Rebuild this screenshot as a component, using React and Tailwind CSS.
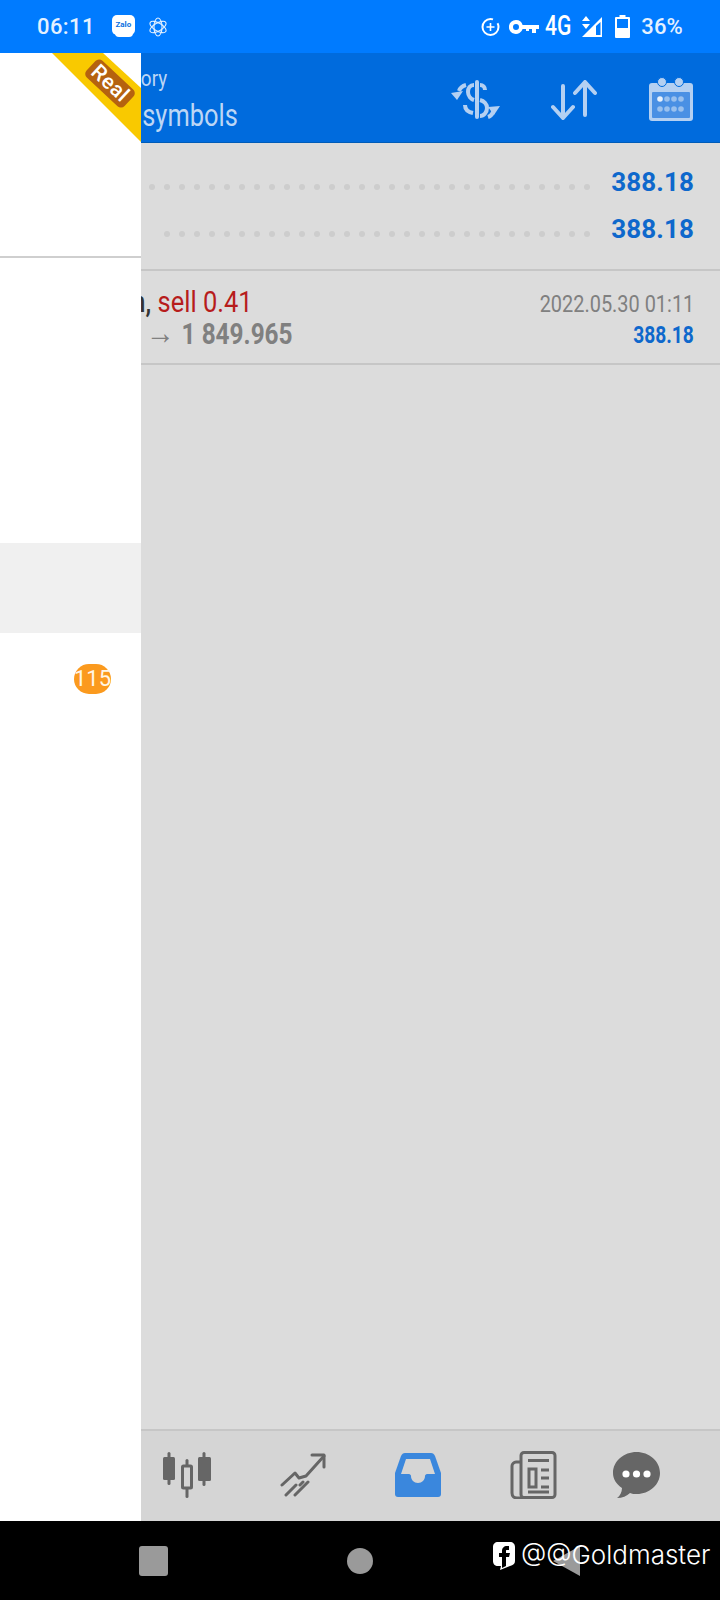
const FONT = { fontFamily: "Roboto, sans-serif" };

function Dots({ count }) {
  return (
    <div className="flex gap-[9px] mb-[6px]">
      {[...Array(count)].map((_, i) => (
        <div key={i} className="w-[6px] h-[6px] rounded-full bg-[#cdcdcd]"></div>
      ))}
    </div>
  );
}

function DollarSwap() {
  return (
    <svg width="50" height="40" viewBox="0 0 50 40" fill="none" stroke="#b4d0f2" strokeWidth="4">
      <path d="M26 2v35" strokeLinecap="round" />
      <path d="M23 5c-4 0-6 3-6 7s3 7 6 8" />
      <path d="M34 10c0-3-2-5-5-5" />
      <path d="M29 20c4 1 7 4 7 8s-3 8-7 8" />
      <path d="M14 25c0 4 3 7 8 8" />
      <path d="M15 5c-4 1-6 3-7 6" />
      <path d="M0 13l12-2-6 9z" fill="#b4d0f2" stroke="none" />
      <path d="M37 37c3-1 5-3 6-8" />
      <path d="M49 26l-12 1 6 8z" fill="#b4d0f2" stroke="none" />
    </svg>
  );
}

function SortArrows() {
  return (
    <svg width="46" height="40" viewBox="0 0 46 40" fill="none" stroke="#b4d0f2" strokeWidth="4" strokeLinecap="round" strokeLinejoin="round">
      <path d="M12 6v31M2 27l10 11 10-11" />
      <path d="M34 35V3M24 13L34 2l10 11" />
    </svg>
  );
}

function Calendar() {
  return (
    <svg width="44" height="44" viewBox="0 0 44 44">
      <rect x="0" y="6" width="44" height="38" rx="3" fill="#b4d0f2" />
      <circle cx="13" cy="5" r="4.5" fill="#b4d0f2" stroke="#006bdd" strokeWidth="1" />
      <circle cx="30" cy="5" r="4.5" fill="#b4d0f2" stroke="#006bdd" strokeWidth="1" />
      <rect x="3" y="15" width="38" height="26" rx="1" fill="#4a90e4" />
      {[11, 18, 25, 32].map((x, i) => (
        <circle key={x} cx={x} cy="22" r="2.8" fill={i === 0 ? "#e8f1fc" : "#b4d0f2"} opacity={i === 0 ? 1 : 0.75} />
      ))}
      {[11, 18, 25, 32].map((x) => (
        <circle key={x} cx={x} cy="32" r="2.8" fill="#b4d0f2" opacity="0.75" />
      ))}
    </svg>
  );
}

function Candles() {
  return (
    <svg width="48" height="46" viewBox="0 0 48 46" fill="#666666">
      <rect x="4.500" y="0" width="3" height="33" rx="1.5" />
      <rect x="0" y="5" width="12" height="23" rx="1.5" />
      <rect x="22.500" y="7" width="3" height="39" rx="1.5" />
      <rect x="19.500" y="14" width="9" height="22" rx="1" fill="#d5d5d5" stroke="#666666" strokeWidth="3" />
      <rect x="39.500" y="0" width="3" height="34" rx="1.5" />
      <rect x="35" y="5" width="13" height="24" rx="1.5" />
    </svg>
  );
}

function Trend() {
  return (
    <svg width="46" height="44" viewBox="0 0 46 44" fill="none" stroke="#666666" strokeWidth="3" strokeLinecap="round" strokeLinejoin="round">
      <path d="M2 32L15 20l4 5 7-2L44 3" />
      <path d="M32 2h12v12" />
      <path d="M6 42L16 32M15 42l13-13M20 32l3-3" />
    </svg>
  );
}

function Inbox() {
  return (
    <svg width="46" height="44" viewBox="0 0 46 44">
      <path d="M10 0h26c2 0 3 1 4 3l6 17v21c0 2-1 3-3 3H3c-2 0-3-1-3-3V20L6 3c1-2 2-3 4-3z" fill="#3a87dd" />
      <path d="M11 6h24l5 15H32c-1 0-2 1-2 2 0 4-3 7-7 7s-7-3-7-7c0-1-1-2-2-2H6z" fill="#d5d5d5" />
    </svg>
  );
}

function News() {
  return (
    <svg width="47" height="48" viewBox="0 0 47 48" fill="none" stroke="#666666" strokeWidth="3">
      <rect x="11" y="1.5" width="34" height="45" rx="3" />
      <path d="M11 11H6c-2 0-4 2-4 4v27c0 3 2 5 5 5h7" />
      <path d="M18 9.500h21" />
      <rect x="19" y="18" width="7" height="18" />
      <path d="M31 19h8M31 27h8M31 36h8M18 41h21" />
    </svg>
  );
}

function Chat() {
  return (
    <svg width="47" height="46" viewBox="0 0 47 46">
      <path d="M23.500 0C36 0 47 9 47 21s-11 21-23 21c-3 0-5 0-7-1-3 3-8 5-13 5 3-2 5-6 5-10C3 32 0 27 0 21 0 9 11 0 23.500 0z" fill="#666666" />
      <circle cx="13" cy="22" r="3.6" fill="#ffffff" />
      <circle cx="23.500" cy="22" r="3.6" fill="#ffffff" />
      <circle cx="34" cy="22" r="3.6" fill="#ffffff" />
    </svg>
  );
}

export default function App() {
  return (
    <div className="relative w-[720px] h-[1600px] overflow-hidden flex flex-col bg-black" style={FONT}>
      {/* status bar */}
      <div className="h-[53px] bg-[#007bff] flex items-center text-[#e4f1ff] pl-[37px] pr-[37px] shrink-0">
        <span className="text-[22px] font-medium tracking-[0.4px]">06:11</span>
        <div className="relative ml-[17px] w-[23px] h-[20px] -mt-[3px] bg-white rounded-[5px] flex items-center justify-center">
          <span className="text-[8px] font-bold text-[#0a6fe0] leading-none">Zalo</span>
          <div className="absolute left-[3px] right-[2px] -bottom-[2px] h-[5px] bg-white rounded-b-[4px]"></div>
        </div>
        <svg className="ml-[14px]" width="18" height="20" viewBox="0 0 18 20" fill="none" stroke="#e4f1ff" strokeWidth="1.1">
          <ellipse cx="9" cy="10" rx="4" ry="9" />
          <ellipse cx="9" cy="10" rx="4" ry="9" transform="rotate(60 9 10)" />
          <ellipse cx="9" cy="10" rx="4" ry="9" transform="rotate(-60 9 10)" />
        </svg>
        <div className="ml-auto flex items-center">
          <svg width="19" height="20" viewBox="0 0 19 20" fill="none" stroke="#fff" strokeWidth="2">
            <circle cx="9.5" cy="10" r="8" strokeDasharray="40 6" />
            <path d="M9.500 6v8M5.500 10h8" strokeWidth="1.6" />
          </svg>
          <svg className="ml-[9px]" width="30" height="16" viewBox="0 0 30 16" fill="#fff">
            <path d="M7 1a7 7 0 0 1 6.6 5H30v4h-3v4h-4v-4h-3v2h-3v-2h-3.400A7 7 0 1 1 7 1zm0 4a3 3 0 1 0 0 6 3 3 0 0 0 0-6z" />
          </svg>
          <span className="ml-[6px] w-[27px] text-[27px] leading-none font-medium text-white inline-block scale-x-[0.78] origin-left whitespace-nowrap">4G</span>
          <svg className="ml-[9px]" width="21" height="21" viewBox="0 0 21 21" fill="#fff">
            <path d="M5 0l4 5H1zM1 8h8l-4 5z" />
            <path d="M21 1v20H1zM19.500 6L15 10v9h4.500z" fillRule="evenodd" />
          </svg>
          <svg className="ml-[13px]" width="15" height="23" viewBox="0 0 15 23">
            <path d="M4.500 0h6v2H14a1 1 0 0 1 1 1v19a1 1 0 0 1-1 1H1a1 1 0 0 1-1-1V3a1 1 0 0 1 1-1h3.500z" fill="#fff" />
            <rect x="2" y="4" width="11" height="9" fill="#007bff" />
          </svg>
          <span className="ml-[11px] text-[22px] font-medium tracking-[0.2px]">36%</span>
        </div>
      </div>

      <div className="relative flex-1 flex flex-col bg-[#dcdcdc]">
        {/* toolbar */}
        <div className="h-[90px] shrink-0 bg-[#006bdd] border-b border-[#005cb8] flex items-center text-[#bcd6f5]">
          <div className="pl-[107px] pt-[4px] leading-none">
            <div className="text-[22px] scale-x-[0.86] origin-left">History</div>
            <div className="mt-[10px] text-[31px] scale-x-[0.82] origin-left whitespace-nowrap">All symbols</div>
          </div>
          <div className="ml-auto flex items-center pr-[27px] pt-[4px]">
            <DollarSwap />
            <div className="ml-[50px]"><SortArrows /></div>
            <div className="ml-[52px] -mt-[2px]"><Calendar /></div>
          </div>
        </div>

        {/* totals */}
        <div className="h-[128px] shrink-0 border-b-2 border-[#c6c6c6] pr-[26px] pt-[26px] flex flex-col items-end gap-[20px]">
          <div className="flex items-end">
            <Dots count={30} />
            <span className="ml-[21px] text-[26px] leading-[27px] font-bold text-[#0e68cc] tracking-[0.1px]">388.18</span>
          </div>
          <div className="flex items-end">
            <Dots count={29} />
            <span className="ml-[21px] text-[26px] leading-[27px] font-bold text-[#0e68cc] tracking-[0.1px]">388.18</span>
          </div>
        </div>

        {/* deal row */}
        <div className="h-[94px] shrink-0 border-b-2 border-[#c6c6c6] pr-[26px] flex justify-between">
          <div className="pl-[25px] pt-[15px] whitespace-nowrap">
            <div className="text-[30px] leading-[32px] scale-x-[0.85] origin-left">
              <span className="font-medium text-[#333333]">XAUUSDm, </span>
              <span className="text-[#b71c1c]">sell 0.41</span>
            </div>
            <div className="pl-[144px] -mt-[3px] text-[29px] leading-[32px] font-bold text-[#808080] scale-x-[0.84] origin-left">
              <span className="font-normal text-[34px] leading-none">→ </span>1 849.965
            </div>
          </div>
          <div className="pt-[18px] flex flex-col items-end whitespace-nowrap">
            <div className="text-[24px] leading-[30px] text-[#808080] scale-x-[0.83] origin-right">2022.05.30 01:11</div>
            <div className="text-[24px] leading-[33px] font-bold text-[#0e68cc] scale-x-[0.8] origin-right">388.18</div>
          </div>
        </div>

        <div className="flex-1"></div>

        {/* bottom nav */}
        <div className="h-[92px] shrink-0 bg-[#d5d5d5] border-t-2 border-[#c6c6c6] flex items-center pl-[163px] pb-[2px]">
          <Candles />
          <div className="ml-[69px]"><Trend /></div>
          <div className="ml-[69px]"><Inbox /></div>
          <div className="ml-[69px]"><News /></div>
          <div className="ml-[56px]"><Chat /></div>
        </div>

        {/* drawer lies over the page */}
        <div className="absolute left-0 top-0 bottom-0 w-[141px] bg-white flex flex-col">
          <div className="h-[205px] border-b-2 border-[#cfcfcf] shrink-0"></div>
          <div className="h-[285px] shrink-0"></div>
          <div className="h-[90px] bg-[#f0f0f0] shrink-0"></div>
          <div className="flex justify-end pr-[30px] pt-[31px]">
            <div className="w-[37px] h-[30px] rounded-full bg-[#fb9a1e] text-[#fff6e6] text-[22px] leading-[30px] flex justify-center whitespace-nowrap">115</div>
          </div>
          <svg className="absolute left-[52px] top-0" width="89" height="89" viewBox="0 0 89 89">
            <path d="M0 0h51l38 35v54z" fill="#f9c900" />
          </svg>
          <div className="absolute left-[84px] top-[19px] w-[52px] h-[23px] rounded-[5px] bg-[#b5620f] rotate-[43deg] text-white text-[21px] leading-[23px] font-medium text-center tracking-[0.5px]">Real</div>
        </div>
      </div>

      {/* system nav */}
      <div className="h-[79px] shrink-0 bg-black flex items-center">
        <div className="ml-[139px] w-[29px] h-[30px] rounded-[3px] bg-[#9a9a9a]"></div>
        <div className="ml-[179px] w-[26px] h-[26px] rounded-full bg-[#9a9a9a]"></div>
        <svg className="ml-[179px]" width="29" height="32" viewBox="0 0 29 32"><path d="M1 16L28 1v30z" fill="#9a9a9a" /></svg>
      </div>

      {/* watermark */}
      <div className="absolute left-[492px] top-[1539px] flex items-center text-white">
        <svg width="24" height="32" viewBox="0 0 24 32">
          <path d="M6 3h12c3 0 5 2 5 5v14c0 3-2 4-5 5l-10 4 1-4H6c-3 0-5-2-5-5V8c0-3 2-5 5-5z" fill="#fff" />
          <path d="M17 7h-2c-3 0-5 2-5 5v2H7v4h3v11l4-2v-9h3l1-4h-4v-2c0-1 0-1 1-1h2z" fill="#000" />
        </svg>
        <span className="ml-[5px] text-[26px] font-light leading-none" style={{ fontFamily: "Inter, sans-serif" }}>@@Goldmaster</span>
      </div>
    </div>
  );
}
